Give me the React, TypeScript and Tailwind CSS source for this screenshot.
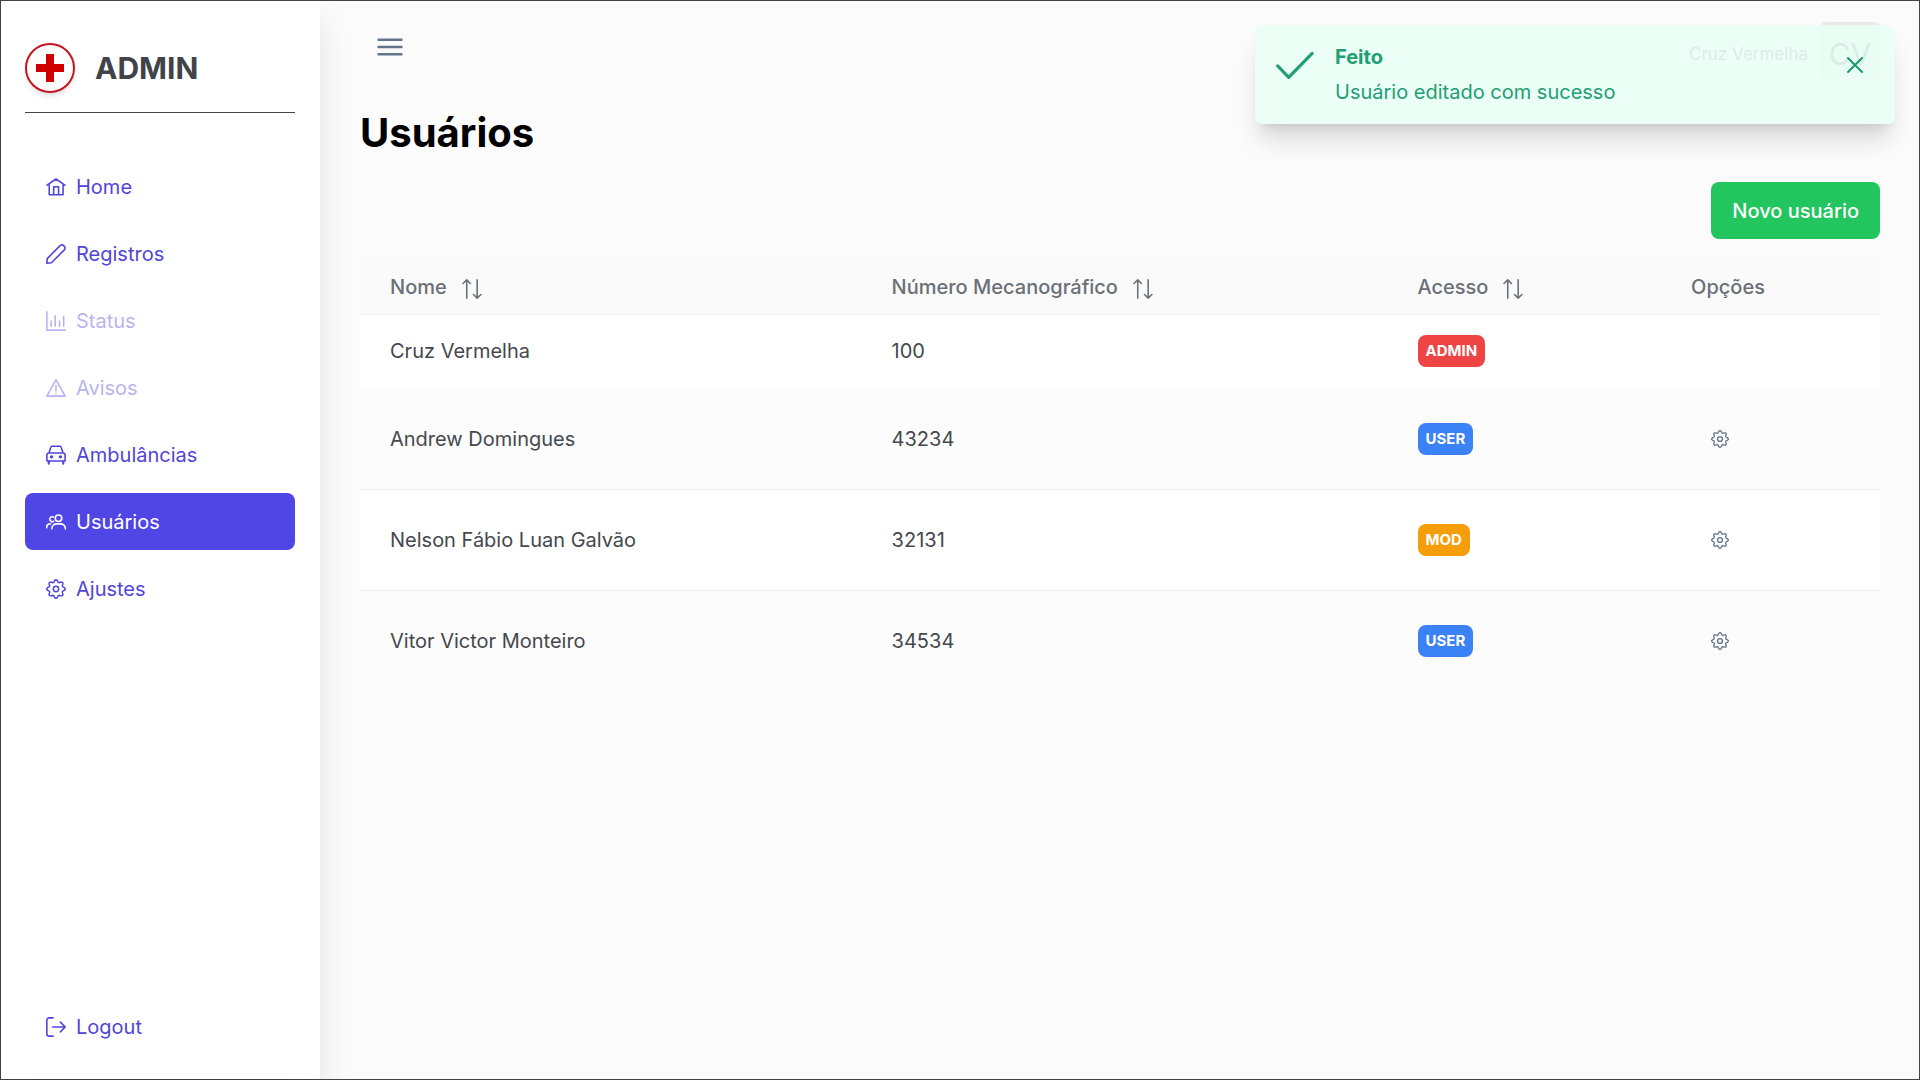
import React from "react";
import type { ReactNode } from "react";

function Icon({ children, className = "size-5", width = 1.9, viewBox = "0 0 24 24" }: {
  children: ReactNode;
  className?: string;
  width?: number;
  viewBox?: string;
}) {
  return (
    <svg
      className={`shrink-0 ${className}`}
      viewBox={viewBox}
      fill="none"
      stroke="currentColor"
      strokeWidth={width}
      strokeLinecap="round"
      strokeLinejoin="round"
      aria-hidden="true"
    >
      {children}
    </svg>
  );
}

const HomeIcon = () => (
  <Icon>
    <path d="M1.2 9.8 12 2.4l10.8 7.4M3.9 8.2v13h16.6v-13M9.2 21v-9.3h5.9V21" />
  </Icon>
);

const PencilIcon = () => (
  <Icon>
    <path d="M1 23l.5-5.500L16.900 2c1.200-1.200 3-1.200 4.100-.1l1 1c1.200 1.200 1.200 3 0 4.100L6.500 22.500z" />
  </Icon>
);

const ChartIcon = () => (
  <Icon>
    <path d="M1 1v22h22M6.200 12v6.300M11 5.800v12.500M16.200 12v6.300M21.200 6.500v11.800" />
  </Icon>
);

const WarningIcon = () => (
  <Icon>
    <path d="M12 2.200 1 21.700h22zM12 9v6.500M12 18.200v.3" />
  </Icon>
);

const CarIcon = () => (
  <Icon>
    <path d="M3.600 9.500 5.700 2.600c.2-.8.8-1.200 1.600-1.200h9.400c.8 0 1.400.4 1.600 1.200l2.100 6.900M3.600 9.500h16.800c1.500 0 2.500 1 2.500 2.400v7.200H1.100v-7.200c0-1.400 1-2.400 2.500-2.400z" />
    <path d="M3.300 19.500v3M20.700 19.500v3" strokeWidth="2.600" />
    <circle cx="6.700" cy="14.200" r="1.100" fill="currentColor" />
    <circle cx="17.300" cy="14.200" r="1.100" fill="currentColor" />
  </Icon>
);

const UsersIcon = () => (
  <Icon>
    <circle cx="15" cy="7.400" r="3.900" />
    <path d="M7 20.200c0-4 2.900-6 6-6h4c3.200 0 6.200 2 6.200 6M8.700 5.900a3 3 0 1 0 .6 5.200M.8 18.800c0-2.900 1.800-4.700 4.800-4.700" />
  </Icon>
);

const cogOutline =
  "M" +
  Array.from({ length: 96 }, (_, i) => {
    const angle = (i / 96) * Math.PI * 2;
    const radius = 9.7 + 1.4 * Math.cos(8 * angle);
    return `${(12 + radius * Math.sin(angle)).toFixed(2)} ${(12 - radius * Math.cos(angle)).toFixed(2)}`;
  }).join("L") +
  "Z";

const CogIcon = ({ className = "size-5" }: { className?: string }) => (
  <Icon className={className} width={1.8}>
    <path d={cogOutline} />
    <circle cx="12" cy="12" r="3.200" />
  </Icon>
);

const LogoutIcon = () => (
  <Icon>
    <path d="M8.500 1H3.900C2.200 1 1 2.200 1 3.900v16.200C1 21.800 2.200 23 3.900 23h4.600M8 12h15M17.300 6.200 23.100 12l-5.800 5.800" />
  </Icon>
);

const SortIcon = () => (
  <Icon>
    <path d="M5.700 23V1M1.200 5.400 5.700 1l4.400 4.400M18.200 1v22M13.800 18.600l4.400 4.400 4.500-4.400" />
  </Icon>
);

const navItems = [
  { label: "Home", icon: <HomeIcon />, state: "text-[#5145d6]" },
  { label: "Registros", icon: <PencilIcon />, state: "text-[#5145d6]" },
  { label: "Status", icon: <ChartIcon />, state: "text-[#5145d6] opacity-40", disabled: true },
  { label: "Avisos", icon: <WarningIcon />, state: "text-[#5145d6] opacity-40", disabled: true },
  { label: "Ambulâncias", icon: <CarIcon />, state: "text-[#5145d6]" },
  { label: "Usuários", icon: <UsersIcon />, state: "bg-[#4f46e5] text-white" },
  { label: "Ajustes", icon: <CogIcon />, state: "text-[#5145d6]" },
];

function NavButton({ label, icon, state, disabled }: {
  label: string;
  icon: ReactNode;
  state: string;
  disabled?: boolean;
}) {
  return (
    <button
      type="button"
      disabled={disabled}
      className={`flex h-[57px] w-full items-center gap-[10px] rounded-lg px-[21px] text-left ${state}`}
    >
      {icon}
      <span>{label}</span>
    </button>
  );
}

const users = [
  { name: "Cruz Vermelha", number: "100", role: "ADMIN", color: "bg-[#ef4444]", editable: false },
  { name: "Andrew Domingues", number: "43234", role: "USER", color: "bg-[#3b82f6]", editable: true },
  { name: "Nelson Fábio Luan Galvão", number: "32131", role: "MOD", color: "bg-[#f59e0b]", editable: true },
  { name: "Vitor Victor Monteiro", number: "34534", role: "USER", color: "bg-[#3b82f6]", editable: true },
];

const columns = [
  { label: "Nome", width: "w-[33%]", sortable: true },
  { label: "Número Mecanográfico", width: "w-[34.6%]", sortable: true },
  { label: "Acesso", width: "w-[18%]", sortable: true },
  { label: "Opções", width: "w-[14.4%]", sortable: false },
];

function Sidebar() {
  return (
    <aside className="z-10 flex w-[319px] shrink-0 flex-col bg-white pr-[25px] pb-6 pl-6 shadow-[0_20px_30px_rgba(0,0,0,0.1)]">
      <div className="flex items-center gap-5 border-b border-[#444] pt-[42px] pb-[19px]">
        <div className="flex size-[50px] items-center justify-center rounded-full border-2 border-[#c4161c] bg-white shadow-md">
          <svg viewBox="0 0 28 28" className="size-7" fill="#d10000" aria-hidden="true">
            <path d="M10 0h8v10h10v8H18v10h-8V18H0v-8h10z" />
          </svg>
        </div>
        <span className="text-[30px] leading-9 font-bold text-[#404348]">ADMIN</span>
      </div>
      <nav className="mt-[45px] flex flex-col gap-[10px]">
        {navItems.map((item) => (
          <NavButton key={item.label} {...item} />
        ))}
      </nav>
      <div className="mt-auto">
        <NavButton label="Logout" icon={<LogoutIcon />} state="text-[#5145d6]" />
      </div>
    </aside>
  );
}

function UsersTable() {
  return (
    <table className="mt-4 w-full table-fixed border-collapse text-left">
      <thead>
        <tr className="h-[59px] border-b border-[#f4f4f4] bg-[#fafafa] text-[#6b7077]">
          {columns.map((column) => (
            <th key={column.label} className={`px-[30px] pt-[5px] font-medium ${column.width}`}>
              {column.sortable ? (
                <button type="button" className="flex items-center gap-[15px]">
                  {column.label}
                  <span className="pt-1">
                    <SortIcon />
                  </span>
                </button>
              ) : (
                column.label
              )}
            </th>
          ))}
        </tr>
      </thead>
      <tbody className="text-[#45484c]">
        {users.map((user) => (
          <tr
            key={user.number}
            className={`border-b odd:bg-white even:bg-[#fcfcfc] last:border-b-0 ${user.editable ? "h-[101px] border-[#f1f1f1]" : "h-[74px] border-[#fafafa]"}`}
          >
            <td className="px-[30px]">{user.name}</td>
            <td className="px-[30px]">{user.number}</td>
            <td className="px-[30px]">
              <span className={`inline-block rounded-lg px-2 text-[15px] leading-8 font-bold text-white align-middle ${user.color}`}>
                {user.role}
              </span>
            </td>
            <td className="px-[30px]">
              {user.editable && (
                <button
                  type="button"
                  aria-label={`Opções de ${user.name}`}
                  className="flex h-[57px] w-[58px] items-center justify-center text-[#64748b]"
                >
                  <CogIcon className="size-[18px]" />
                </button>
              )}
            </td>
          </tr>
        ))}
      </tbody>
    </table>
  );
}

function Toast() {
  return (
    <div
      role="status"
      className="absolute top-6 right-6 z-20 flex w-[640px] items-start rounded-lg bg-[#eafff5]/90 px-5 pt-[14px] pb-[17px] text-[#229e74] shadow-[0_20px_25px_-5px_rgba(0,0,0,0.14),0_8px_10px_-6px_rgba(0,0,0,0.1)]"
    >
      <Icon className="mt-[6px] size-10" width={1.9}>
        <path d="M1.600 12.500 8.200 19.400 22.300 5" />
      </Icon>
      <div className="ml-5 flex-1 pt-[3px]">
        <p className="leading-[30px] font-bold">Feito</p>
        <p className="mt-[5px] leading-[30px]">Usuário editado com sucesso</p>
      </div>
      <button type="button" aria-label="Fechar" className="flex size-10 items-center justify-center text-[#17966c]">
        <Icon className="mt-[12px] size-4" width={2.8}>
          <path d="M1.500 1.500l21 21M22.500 1.500l-21 21" />
        </Icon>
      </button>
    </div>
  );
}

export default function App() {
  return (
    <div className="relative flex min-h-screen border border-[#444] bg-[#fbfbfb] font-['Inter',sans-serif] text-[20px] leading-[30px]">
      <Sidebar />
      <main className="min-w-0 flex-1 pr-[39px] pl-10">
        <header className="flex items-start justify-between pt-[21px]">
          <button type="button" aria-label="Menu" className="flex h-[49px] w-[60px] items-center justify-center text-[#64748b]">
            <Icon className="size-[26px]" width={2.4}>
              <path d="M1.500 5.300h21M1.500 12h21M1.500 18.700h21" />
            </Icon>
          </button>
          <div className="flex items-center gap-3 text-[#404348]">
            <span className="pt-[4px] text-[17px]">Cruz Vermelha</span>
            <span className="flex size-[60px] items-center justify-center rounded-md bg-[#e9e9e9] pt-[4px] text-[30px]">CV</span>
          </div>
        </header>
        <h1 className="mt-[21px] text-[40px] leading-[60px] font-bold text-black">Usuários</h1>
        <div className="mt-[19px] flex justify-end">
          <button type="button" className="h-[57px] rounded-lg bg-[#22c55e] px-[21px] font-medium text-white">
            Novo usuário
          </button>
        </div>
        <UsersTable />
      </main>
      <Toast />
    </div>
  );
}
